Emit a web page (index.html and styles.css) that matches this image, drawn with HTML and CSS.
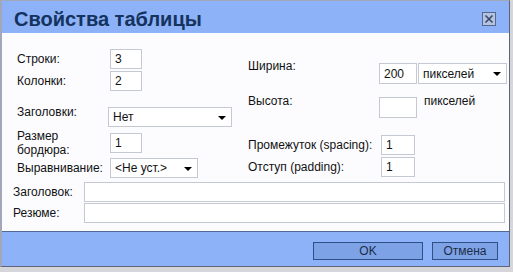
FILE: index.html
```html
<!DOCTYPE html>
<html>
<head>
  <meta charset="utf-8">
  <title>Свойства таблицы</title>
  <link rel="stylesheet" href="styles.css">
</head>
<body>

<div class="dialog">
  <div class="titlebar">
    <span class="title">Свойства таблицы</span>
    <svg class="close" width="14" height="14" viewBox="0 0 14 14">
      <rect x="0.5" y="0.5" width="13" height="13" fill="#b3c3e4" stroke="#56688c"/>
      <path d="M3.5 3.5 L10.5 10.5 M10.5 3.5 L3.5 10.5" stroke="#3b4763" stroke-width="1.6"/>
    </svg>
  </div>

  <div class="content">
    <div class="columns">
      <!-- left column -->
      <div class="col-left">
        <div class="row">
          <label>Строки:</label>
          <input class="num" type="text" value="3">
        </div>
        <div class="row row-tight">
          <label>Колонки:</label>
          <input class="num" type="text" value="2">
        </div>
        <div class="row row-top row-headers">
          <label class="lbl-up">Заголовки:</label>
          <span class="sel sel-headers"><select><option>Нет</option></select></span>
        </div>
        <div class="row row-border">
          <label class="lbl-2">Размер<br>бордюра:</label>
          <input class="num" type="text" value="1">
        </div>
        <div class="row row-align">
          <label>Выравнивание:</label>
          <span class="sel sel-align"><select><option>&lt;Не уст.&gt;</option></select></span>
        </div>
      </div>

      <!-- right column -->
      <div class="col-right">
        <div class="rrow rrow-width">
          <label>Ширина:</label>
          <input class="size" type="text" value="200">
          <span class="sel sel-unit"><select><option>пикселей</option></select></span>
        </div>
        <div class="rrow rrow-height">
          <label>Высота:</label>
          <input class="size" type="text" value="">
          <span class="unit">пикселей</span>
        </div>
        <div class="rrow rrow-mid rrow-spacing">
          <label>Промежуток (spacing):</label>
          <input class="num2" type="text" value="1">
        </div>
        <div class="rrow rrow-mid rrow-padding">
          <label>Отступ (padding):</label>
          <input class="num2" type="text" value="1">
        </div>
      </div>
    </div>

    <div class="wide-row wide-first">
      <label>Заголовок:</label>
      <input class="wide" type="text">
    </div>
    <div class="wide-row">
      <label>Резюме:</label>
      <input class="wide" type="text">
    </div>
  </div>

  <div class="footer">
    <button class="btn btn-ok">OK</button>
    <button class="btn btn-cancel">Отмена</button>
  </div>
</div>

</body>
</html>
```

FILE: styles.css
```css
body {
  margin: 0;
  background-color: #d6d6da;
  font-family: "Liberation Sans", Arial, sans-serif;
  font-size: 12px;
  color: #111;
}
.dialog {
  width: 507px;
  border-left: 2px solid #a2a8ba;
  border-top: 1px solid #a2a8ba;
  border-right: 1px solid #5d6576;
  border-bottom: 1px solid #5d6576;
  background-color: #fcfcff;
}
.titlebar {
  height: 32px;
  background-color: #8db2f7;
  display: flex;
  align-items: flex-start;
  justify-content: space-between;
}
.title {
  font-size: 20px;
  font-weight: bold;
  color: #14335f;
  padding: 4px 0 0 12px;
  line-height: 28px;
}
.close {
  margin: 11px 13px 0 0;
}

.content {
  padding: 16px 0 8px 11px;
}
.columns {
  display: flex;
}
.col-left {
  margin-left: 4px;
  width: 231px;
}
.col-right {
  padding-top: 10px;
}
label {
  line-height: 14px;
}

/* left column rows */
.row {
  display: flex;
  align-items: center;
  height: 20px;
}
.row label {
  width: 93px;
}
.row-tight {
  margin-top: 2px;
}
.row-headers {
  margin-top: 16px;
  align-items: flex-start;
}
.lbl-up {
  margin-top: -2px;
}
.row-border {
  margin-top: 2px;
  height: 28px;
}
.row-align {
  margin-top: 1px;
}

input {
  box-sizing: border-box;
  height: 20px;
  border: 1px solid #c4c9d3;
  background: #fff;
  font-family: "Liberation Sans", Arial, sans-serif;
  font-size: 12px;
  color: #111;
  padding: 0 4px;
  margin: 0;
  outline: none;
}
.num {
  width: 32px;
}
.sel {
  position: relative;
  display: inline-block;
}
.sel::after {
  content: "";
  position: absolute;
  right: 6px;
  top: 9px;
  border-left: 4px solid transparent;
  border-right: 4px solid transparent;
  border-top: 4px solid #000;
}
select {
  appearance: none;
  -webkit-appearance: none;
  box-sizing: border-box;
  height: 20px;
  border: 1px solid #c4c9d3;
  border-radius: 0;
  background: #fff;
  font-family: "Liberation Sans", Arial, sans-serif;
  font-size: 12px;
  color: #111;
  padding: 0 0 0 4px;
  margin: 0;
}
.sel-headers {
  margin-left: -2px;
}
.sel-headers select {
  width: 124px;
}
.sel-align select {
  width: 88px;
}

/* right column rows */
.rrow {
  display: flex;
  align-items: flex-start;
}
.rrow label {
  width: 131px;
}
.size {
  width: 38px;
  height: 21px;
}
.rrow-width .size,
.rrow-width .sel {
  margin-top: 4px;
}
.sel-unit {
  margin-left: 1px;
}
.sel-unit select {
  width: 89px;
  height: 21px;
}
.rrow-height {
  margin-top: 10px;
}
.rrow-height .size {
  margin-top: 3px;
}
.unit {
  margin-left: 7px;
  line-height: 14px;
}
.rrow-mid {
  align-items: center;
  height: 20px;
}
.rrow-mid label {
  width: 133px;
}
.num2 {
  width: 34px;
}
.rrow-spacing {
  margin-top: 17px;
}
.rrow-padding {
  margin-top: 2px;
}

/* full width rows */
.wide-row {
  display: flex;
  align-items: center;
  margin-top: 1px;
}
.wide-first {
  margin-top: 4px;
}
.wide-row label {
  width: 71px;
}
.wide {
  width: 421px;
}

.footer {
  border-top: 1px solid #4f6894;
  height: 35px;
  background-color: #8db2f7;
  display: flex;
  justify-content: flex-end;
  align-items: flex-start;
  gap: 9px;
  padding: 10px 11px 0 0;
  box-sizing: border-box;
}
.btn {
  height: 18px;
  background-color: #7ea2e6;
  border: 1px solid #2f4f86;
  border-radius: 0;
  font-family: "Liberation Sans", Arial, sans-serif;
  font-size: 12px;
  color: #1d2d48;
  padding: 0;
  margin: 0;
}
.btn-ok {
  width: 110px;
}
.btn-cancel {
  width: 66px;
}
```
